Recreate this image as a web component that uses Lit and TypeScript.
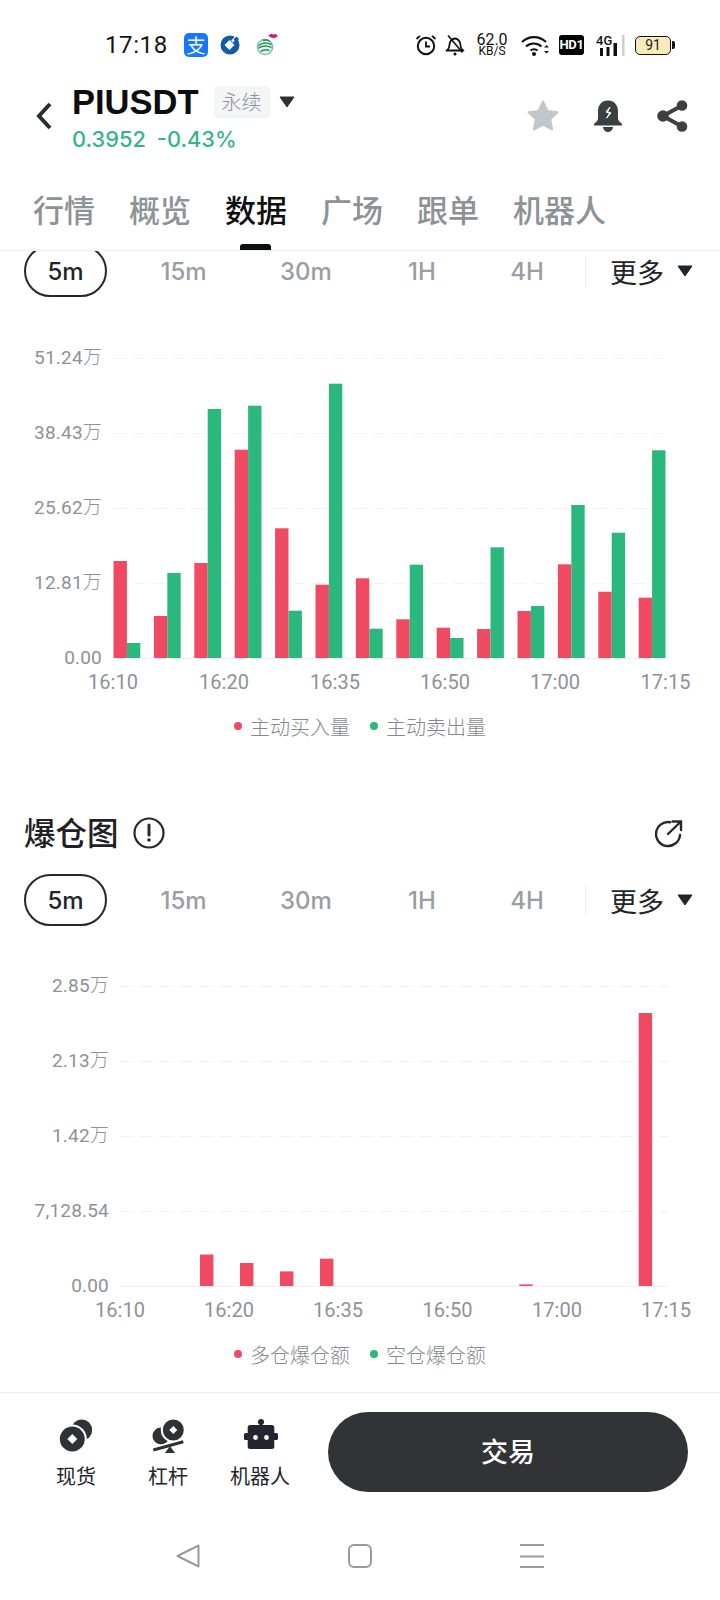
import { LitElement, html, css, svg } from "lit";
import { customElement, property } from "lit/decorators.js";

const RED = "#F04A63";
const GREEN = "#2BB87C";

interface ChartData {
  gridTop: number;
  gridX1: number;
  gridX2: number;
  labelRight: number;
  yLabels: string[];
  xLabels: [string, number][];
  bars: { x: number; h: number; c: string }[];
  legend: [string, string];
}

const reds1 = [97, 42, 95, 208.3, 129.7, 73.3, 79.7, 38.7, 30.3, 29, 47, 93.7, 66.3, 60.3];
const greens1 = [15, 85, 249, 252.3, 47.3, 274.3, 29.3, 93.3, 20, 110.7, 52, 153, 125.3, 207.7];

const chart1: ChartData = {
  gridTop: 61,
  gridX1: 113,
  gridX2: 662,
  labelRight: 102,
  yLabels: ["51.24万", "38.43万", "25.62万", "12.81万", "0.00"],
  xLabels: [["16:10", 113], ["16:20", 224], ["16:35", 335], ["16:50", 445], ["17:00", 555], ["17:15", 665.5]],
  bars: [
    ...reds1.map((h, i) => ({ x: 113.5 + i * 40.4, h, c: RED })),
    ...greens1.map((h, i) => ({ x: 126.9 + i * 40.4, h, c: GREEN })),
  ],
  legend: ["主动买入量", "主动卖出量"],
};

const chart2: ChartData = {
  gridTop: 60,
  gridX1: 120,
  gridX2: 668,
  labelRight: 109,
  yLabels: ["2.85万", "2.13万", "1.42万", "7,128.54", "0.00"],
  xLabels: [["16:10", 120], ["16:20", 229], ["16:35", 338], ["16:50", 447.5], ["17:00", 557], ["17:15", 666]],
  bars: [
    { x: 200, h: 31.5, c: RED },
    { x: 240, h: 23, c: RED },
    { x: 280, h: 14.6, c: RED },
    { x: 320, h: 27.3, c: RED },
    { x: 519.3, h: 1.6, c: RED },
    { x: 638.7, h: 273, c: RED },
  ],
  legend: ["多仓爆仓额", "空仓爆仓额"],
};

@customElement("bar-chart")
class BarChart extends LitElement {
  @property({ attribute: false }) data!: ChartData;
  static styles = css`
    :host { display: block; }
    svg { display: block; }
    .grid { stroke: #f1f2f3; stroke-width: 1; stroke-dasharray: 13 7; fill: none; }
    .axis { stroke: #eceeef; stroke-width: 1; fill: none; }
    .lbl {
      font-family: "Roboto", "Noto Sans CJK SC", sans-serif;
      font-size: 19px;
      font-weight: 400;
      letter-spacing: 0.2px;
      fill: #8e9296;
    }
    .xl { font-size: 20px; letter-spacing: 0; }
    .wan { font-weight: 300; }
    .legend {
      font-family: "Noto Sans CJK SC", sans-serif;
      font-size: 20px;
      font-weight: 300;
      fill: #85898d;
    }
  `;
  render() {
    const d = this.data;
    const base = d.gridTop + 300;
    const step = 75;
    const h = base + 90;
    return html`<svg width="720" height=${h} viewBox="0 0 720 ${h}">
      ${d.yLabels.map((t, i) => {
        const y = d.gridTop + i * step;
        const hasWan = t.endsWith("万");
        return svg`
          <line class=${i === 4 ? "axis" : "grid"} x1=${d.gridX1} x2=${d.gridX2} y1=${y + 0.5} y2=${y + 0.5}></line>
          <text class="lbl" x=${d.labelRight} y=${y + 6} text-anchor="end">${hasWan ? t.slice(0, -1) : t}${hasWan ? svg`<tspan class="wan">万</tspan>` : ""}</text>`;
      })}
      ${d.bars.map((b) => svg`<rect x=${b.x} y=${base - b.h} width="13.4" height=${b.h} fill=${b.c}></rect>`)}
      ${d.xLabels.map(([t, x]) => svg`<text class="lbl xl" x=${x} y=${base + 31} text-anchor="middle">${t}</text>`)}
      <circle cx="238" cy=${base + 68} r="4" fill=${RED}></circle>
      <text class="legend" x="250" y=${base + 77}>${d.legend[0]}</text>
      <circle cx="374" cy=${base + 68} r="4" fill=${GREEN}></circle>
      <text class="legend" x="386" y=${base + 77}>${d.legend[1]}</text>
    </svg>`;
  }
}

@customElement("time-filter")
class TimeFilter extends LitElement {
  static styles = css`
    :host { display: block; }
    .row {
      display: grid;
      grid-template-columns: 83px 153px 92px 140px 70px 24px auto;
      align-items: center;
      height: 52px;
      padding-left: 24px;
      font-family: "Inter", "Liberation Sans", sans-serif;
      font-size: 24px;
      font-weight: 500;
      color: #9a9ea2;
    }
    .item { text-align: center; }
    .on {
      height: 52px;
      line-height: 49px;
      box-sizing: border-box;
      border: 2px solid #26282b;
      border-radius: 26px;
      color: #222528;
      text-align: center;
    }
    .sep { height: 32px; width: 1px; justify-self: end; background: #eceded; }
    .more {
      display: flex;
      align-items: center;
      gap: 13px;
      padding-left: 24px;
      font-family: "Noto Sans CJK SC", sans-serif;
      font-size: 27px;
      font-weight: 400;
      color: #222528;
    }
    .tri { width: 16px; height: 12px; }
  `;
  render() {
    return html`<div class="row">
      <div class="on">5m</div>
      <div class="item">15m</div>
      <div class="item">30m</div>
      <div class="item">1H</div>
      <div class="item">4H</div>
      <div class="sep"></div>
      <div class="more">更多
        <svg class="tri" viewBox="0 0 16 12"><path d="M1 1h14l-7 10z" fill="#222528" stroke="#222528" stroke-linejoin="round"/></svg>
      </div>
    </div>`;
  }
}

@customElement("app-root")
class AppRoot extends LitElement {
  static styles = css`
    :host {
      display: block;
      width: 720px;
      height: 1600px;
      background: #fff;
      overflow: hidden;
      font-family: "Liberation Sans", "Noto Sans CJK SC", sans-serif;
      color: #111;
    }
    svg { display: block; }

    .status {
      height: 90px;
      display: flex;
      align-items: center;
      padding-left: 105px;
      box-sizing: border-box;
    }
    .clock {
      width: 61px;
      font-family: "Roboto", sans-serif;
      font-size: 24px;
      color: #151515;
      letter-spacing: 0.6px;
      white-space: nowrap;
    }
    .apps { display: flex; align-items: center; margin-left: 18px; }
    .alipay {
      width: 24px;
      height: 24px;
      border-radius: 5px;
      background: #1677ff;
      color: #fff;
      font-family: "Noto Sans CJK SC", sans-serif;
      font-size: 19px;
      line-height: 23px;
      text-align: center;
    }
    .ccb { margin-left: 10px; }
    .cm { margin-left: 13px; }
    .sys { display: flex; align-items: center; margin-left: 134px; }
    .mute { margin-left: 8px; }
    .speed {
      width: 34px;
      margin-left: 10px;
      font-family: "Roboto", sans-serif;
      text-align: center;
      color: #111;
      line-height: 1;
    }
    .speed b { display: block; font-weight: 400; font-size: 16px; height: 13px; line-height: 13px; }
    .speed i { display: block; font-style: normal; font-size: 12px; height: 11px; line-height: 11px; }
    .wifi { margin-left: 11px; }
    .hd {
      width: 25px;
      height: 20px;
      margin-left: 9px;
      border-radius: 3px;
      background: #000;
      color: #fff;
      font-family: "Roboto", sans-serif;
      font-size: 13px;
      font-weight: 700;
      line-height: 20px;
      text-align: center;
      letter-spacing: -0.3px;
    }
    .sig { position: relative; margin-left: 11px; width: 30px; height: 21px; }
    .sig span {
      position: absolute;
      left: 1px;
      top: -1px;
      font-family: "Roboto", sans-serif;
      font-size: 13px;
      font-weight: 500;
      line-height: 13px;
      color: #111;
    }
    .batt { display: flex; align-items: center; margin-left: 10px; }
    .cell {
      width: 36px;
      height: 19px;
      box-sizing: border-box;
      border: 1.6px solid #111;
      border-radius: 5px;
      background: #fbeab9;
      font-family: "Roboto", sans-serif;
      font-size: 14px;
      line-height: 16px;
      text-align: center;
      color: #222;
    }
    .nub { width: 2.5px; height: 8px; background: #111; margin-left: 1px; border-radius: 0 2px 2px 0; }

    .head { height: 80px; display: flex; align-items: flex-start; }
    .back { margin: 12px 0 0 34px; width: 20px; }
    .ttl { margin-left: 18px; }
    .ttlrow { display: flex; align-items: center; height: 26px; margin-top: -1px; }
    .sym { font-size: 34.5px; font-weight: 700; color: #0c0d0e; line-height: 26px; }
    .badge {
      margin-left: 15px;
      width: 56px;
      height: 32px;
      border-radius: 4px;
      background: #f4f5f6;
      color: #909396;
      font-family: "Noto Sans CJK SC", sans-serif;
      font-size: 20px;
      font-weight: 300;
      line-height: 31px;
      text-align: center;
    }
    .caret { margin-left: 9px; }
    .price {
      display: flex;
      gap: 11px;
      margin-top: 11px;
      font-family: "Inter", sans-serif;
      font-size: 21.800px;
      font-weight: 500;
      line-height: 26px;
      color: #34b585;
    }
    .acts { margin-left: auto; display: flex; align-items: center; padding: 9px 32px 0 0; gap: 33px; }

    .tabs {
      height: 81px;
      box-sizing: border-box;
      border-bottom: 1px solid #eeeff0;
      display: flex;
      gap: 34px;
      padding: 13px 0 0 33px;
      font-family: "Noto Sans CJK SC", sans-serif;
      font-size: 31px;
      font-weight: 500;
      line-height: 52px;
      color: #8d9296;
    }
    .tab { position: relative; white-space: nowrap; }
    .tab.on { color: #0d0e10; }
    .tab.on::after {
      content: "";
      position: absolute;
      left: 15px;
      bottom: 0;
      width: 31px;
      height: 6px;
      border-radius: 3px 3px 0 0;
      background: #0d0e10;
    }

    .body { height: 1141px; overflow: hidden; }
    .top { margin-top: -6px; }
    .sec {
      height: 50px;
      display: flex;
      align-items: center;
      margin-top: 60px;
      padding: 0 36px 0 24px;
      font-family: "Noto Sans CJK SC", sans-serif;
      font-size: 31.5px;
      font-weight: 500;
      color: #1f2124;
    }
    .sec .name { margin-top: -4px; }
    .sec .info { margin-left: 14px; }
    .sec .ext { margin-left: auto; }
    .gap16 { margin-top: 16px; }

    .bar { border-top: 1px solid #eeeff0; height: 208px; box-sizing: border-box; }
    .barrow { display: flex; padding: 19px 0 0 30px; }
    .tool {
      width: 92px;
      padding-top: 7px;
      display: flex;
      flex-direction: column;
      align-items: center;
      font-family: "Noto Sans CJK SC", sans-serif;
      font-size: 20px;
      line-height: 28px;
      color: #222528;
      white-space: nowrap;
    }
    .tool svg { margin-bottom: 3px; }
    .trade {
      width: 360px;
      height: 80px;
      margin-left: 22px;
      border-radius: 40px;
      background: #313336;
      color: #fff;
      font-family: "Noto Sans CJK SC", sans-serif;
      font-size: 27px;
      font-weight: 500;
      line-height: 77px;
      text-align: center;
    }
    .nav { display: flex; padding: 52px 0 0 176px; }
    .nav svg:nth-child(2) { margin-left: 148px; }
    .nav svg:nth-child(3) { margin-left: 148px; }
  `;

  render() {
    return html`
      <div class="status">
        <div class="clock">17:18</div>
        <div class="apps">
          <div class="alipay">支</div>
          <svg class="ccb" width="24" height="24" viewBox="0 0 24 24">
            <circle cx="12" cy="12" r="9.500" fill="#0f5ca8"/>
            <path d="M11.500 7l5 5-5 5-5-5z" fill="#fff"/>
            <path d="M14 8.500L20 2.500" stroke="#fff" stroke-width="2.500"/>
            <path d="M15.500 6.500l3-3 2.500 2.500-3 3z" fill="#0f5ca8"/>
          </svg>
          <svg class="cm" width="26" height="26" viewBox="0 0 26 26">
            <circle cx="10" cy="15" r="7.600" fill="#e6f3ee" stroke="#6dbbc0" stroke-width="1.400"/>
            <path d="M3.500 13.500c4-3 9-3 13-1M3.500 16c4-2.500 9-2.500 13-.5M5.500 19.500c3-2 6-2 9-1M8 8.500c3-1 5-.5 7 1" fill="none" stroke="#2f8f5b" stroke-width="1.500"/>
            <path d="M13 3.500l3.500-1.800 2 1 2-1 2.500 2.600-3.500 1.800-3-.4z" fill="#d3187a"/>
          </svg>
        </div>
        <div class="sys">
          <svg width="22" height="22" viewBox="0 0 22 22">
            <circle cx="11" cy="12" r="8.200" fill="none" stroke="#111" stroke-width="2"/>
            <path d="M11 7.500V12.500H15" fill="none" stroke="#111" stroke-width="1.800"/>
            <path d="M1.500 5L5 1.800M20.500 5L17 1.800" stroke="#111" stroke-width="1.800"/>
          </svg>
          <svg class="mute" width="20" height="22" viewBox="0 0 20 22">
            <path d="M1.500 16.500c2-1 2.700-2.500 3-6 .2-3 2.500-6 5.500-6 2.900 0 5.200 3 5.400 6 .3 3.500 1 5 3 6z" fill="none" stroke="#111" stroke-width="1.800" stroke-linejoin="round"/>
            <path d="M3 1.500L17.500 18.500" stroke="#111" stroke-width="1.600"/>
            <circle cx="10" cy="20" r="1.500" fill="#111"/>
          </svg>
          <div class="speed"><b>62.0</b><i>KB/S</i></div>
          <svg class="wifi" width="30" height="22" viewBox="0 0 30 22">
            <path d="M2 8C9 1.500 19 1.500 26 8M6 12.500c4.500-4 11-4 15.500 0M10.500 16.500c2-1.700 5-1.700 7 0" fill="none" stroke="#111" stroke-width="2.200"/>
            <circle cx="14" cy="20" r="2" fill="#111"/>
            <path d="M24 13.500l2.500-2.500 2.500 2.500zM24 17l2.500 2.500L29 17z" fill="#111"/>
          </svg>
          <div class="hd">HD1</div>
          <div class="sig">
            <span>4G</span>
            <svg width="30" height="21" viewBox="0 0 30 21">
              <rect x="5" y="13" width="3" height="8" fill="#111"/>
              <rect x="11.500" y="12" width="3" height="9" fill="#111"/>
              <rect x="18.500" y="8" width="3.500" height="13" fill="#111"/>
              <rect x="27" y="0" width="2.500" height="21" fill="#cfcfcf"/>
            </svg>
          </div>
          <div class="batt"><div class="cell">91</div><div class="nub"></div></div>
        </div>
      </div>

      <div class="head">
        <svg class="back" width="20" height="28" viewBox="0 0 20 28">
          <path d="M16 2L5 14l11 12" fill="none" stroke="#2b2e31" stroke-width="4"/>
        </svg>
        <div class="ttl">
          <div class="ttlrow">
            <div class="sym">PIUSDT</div>
            <div class="badge">永续</div>
            <svg class="caret" width="16" height="12" viewBox="0 0 16 12"><path d="M1 1h14l-7 10z" fill="#2f3235" stroke="#2f3235" stroke-linejoin="round"/></svg>
          </div>
          <div class="price"><span>0.3952</span><span>-0.43%</span></div>
        </div>
        <div class="acts">
          <svg width="34" height="34" viewBox="0 0 34 34">
            <path d="M17 2.500l4.500 9.500 10 1.300-7.300 7 1.900 10.200-9.100-5-9.100 5 1.900-10.200-7.300-7 10-1.300z" fill="#c3c7cb" stroke="#c3c7cb" stroke-width="2" stroke-linejoin="round"/>
          </svg>
          <svg width="30" height="34" viewBox="0 0 30 34">
            <path d="M15 1.500c-6.500 0-10 5-10 10.500v7.500c0 2-2 3.500-4 5.500v1.500h28V25c-2-2-4-3.500-4-5.500V12C25 6.500 21.500 1.500 15 1.500z" fill="#3d4043"/>
            <path d="M9.800 28h10.400c-.6 3-2.700 5-5.200 5s-4.600-2-5.200-5z" fill="#3d4043"/>
            <path d="M17 8l-4 5 3.500 1.200-3 5 4.500-5.300-3.500-1.200z" fill="#fff" stroke="#fff" stroke-width="1"/>
          </svg>
          <svg width="32" height="34" viewBox="0 0 32 34">
            <path d="M26 6.500L7 17l19 10.500" fill="none" stroke="#3d4043" stroke-width="4"/>
            <circle cx="26" cy="6.500" r="5.300" fill="#3d4043"/>
            <circle cx="7" cy="17" r="5.800" fill="#3d4043"/>
            <circle cx="26" cy="27.500" r="5.300" fill="#3d4043"/>
          </svg>
        </div>
      </div>

      <div class="tabs">
        <div class="tab">行情</div>
        <div class="tab">概览</div>
        <div class="tab on">数据</div>
        <div class="tab">广场</div>
        <div class="tab">跟单</div>
        <div class="tab">机器人</div>
      </div>

      <div class="body">
        <time-filter class="top"></time-filter>
        <bar-chart .data=${chart1}></bar-chart>
        <div class="sec"><span class="name">爆仓图</span>
          <svg class="info" width="32" height="32" viewBox="0 0 32 32">
            <circle cx="16" cy="16" r="14.500" fill="none" stroke="#26282b" stroke-width="2.200"/>
            <path d="M16 8v10" stroke="#26282b" stroke-width="3" stroke-linecap="round"/>
            <circle cx="16" cy="23" r="1.800" fill="#26282b"/>
          </svg>
          <svg class="ext" width="30" height="30" viewBox="0 0 30 30">
            <path d="M16 4.200A12 12 0 1 0 26 17" fill="none" stroke="#26282b" stroke-width="2.400" stroke-linecap="round"/>
            <path d="M14 16L27 3.500M18.500 3.500H27V12" fill="none" stroke="#26282b" stroke-width="2.400" stroke-linecap="round"/>
          </svg>
        </div>
        <time-filter class="gap16"></time-filter>
        <bar-chart .data=${chart2}></bar-chart>
      </div>

      <div class="bar">
        <div class="barrow">
          <div class="tool">
            <svg width="40" height="40" viewBox="0 0 40 40">
              <circle cx="25.700" cy="11" r="10.500" fill="#2f3235"/>
              <circle cx="16.300" cy="20" r="14.500" fill="#fff"/>
              <path fill-rule="evenodd" d="M16.300 7.500a12.500 12.500 0 1 1 0 25 12.500 12.500 0 0 1 0-25zM16.300 15l-5 5 5 5 5-5z" fill="#2f3235"/>
            </svg>
            现货
          </div>
          <div class="tool">
            <svg width="40" height="40" viewBox="0 0 40 40">
              <circle cx="13" cy="17" r="8.500" fill="#2f3235"/>
              <circle cx="25.300" cy="11" r="12.500" fill="#fff"/>
              <path fill-rule="evenodd" d="M25.300 .5a10.500 10.500 0 1 1 0 21 10.500 10.500 0 0 1 0-21zM25.300 7l-4 4 4 4 4-4z" fill="#2f3235"/>
              <path d="M5.300 31l30-8.300" stroke="#fff" stroke-width="6"/>
              <path d="M5.300 31l30-8.300" stroke="#2f3235" stroke-width="3"/>
              <path d="M22 27l5 7H17z" fill="#2f3235"/>
            </svg>
            杠杆
          </div>
          <div class="tool">
            <svg width="40" height="40" viewBox="0 0 40 40">
              <circle cx="21" cy="3" r="3" fill="#23262e"/>
              <rect x="20" y="4" width="2" height="4" fill="#23262e"/>
              <rect x="7.700" y="6" width="26.600" height="24" rx="2.500" fill="#23262e"/>
              <rect x="4" y="14" width="34" height="7" rx="1.500" fill="#23262e"/>
              <circle cx="15.500" cy="18.500" r="2.400" fill="#fff"/>
              <circle cx="26.500" cy="18.500" r="2.400" fill="#fff"/>
            </svg>
            机器人
          </div>
          <div class="trade">交易</div>
        </div>
        <div class="nav">
          <svg width="24" height="24" viewBox="0 0 24 24"><path d="M22.500 1.500v21L1.500 12z" fill="none" stroke="#9a9a9a" stroke-width="2" stroke-linejoin="round"/></svg>
          <svg width="24" height="24" viewBox="0 0 24 24"><rect x="1" y="1" width="22" height="22" rx="5" fill="none" stroke="#9a9a9a" stroke-width="2"/></svg>
          <svg width="24" height="24" viewBox="0 0 24 24"><path d="M0 1h24M0 12.500h24M0 23h24" stroke="#9a9a9a" stroke-width="2"/></svg>
        </div>
      </div>
    `;
  }
}
